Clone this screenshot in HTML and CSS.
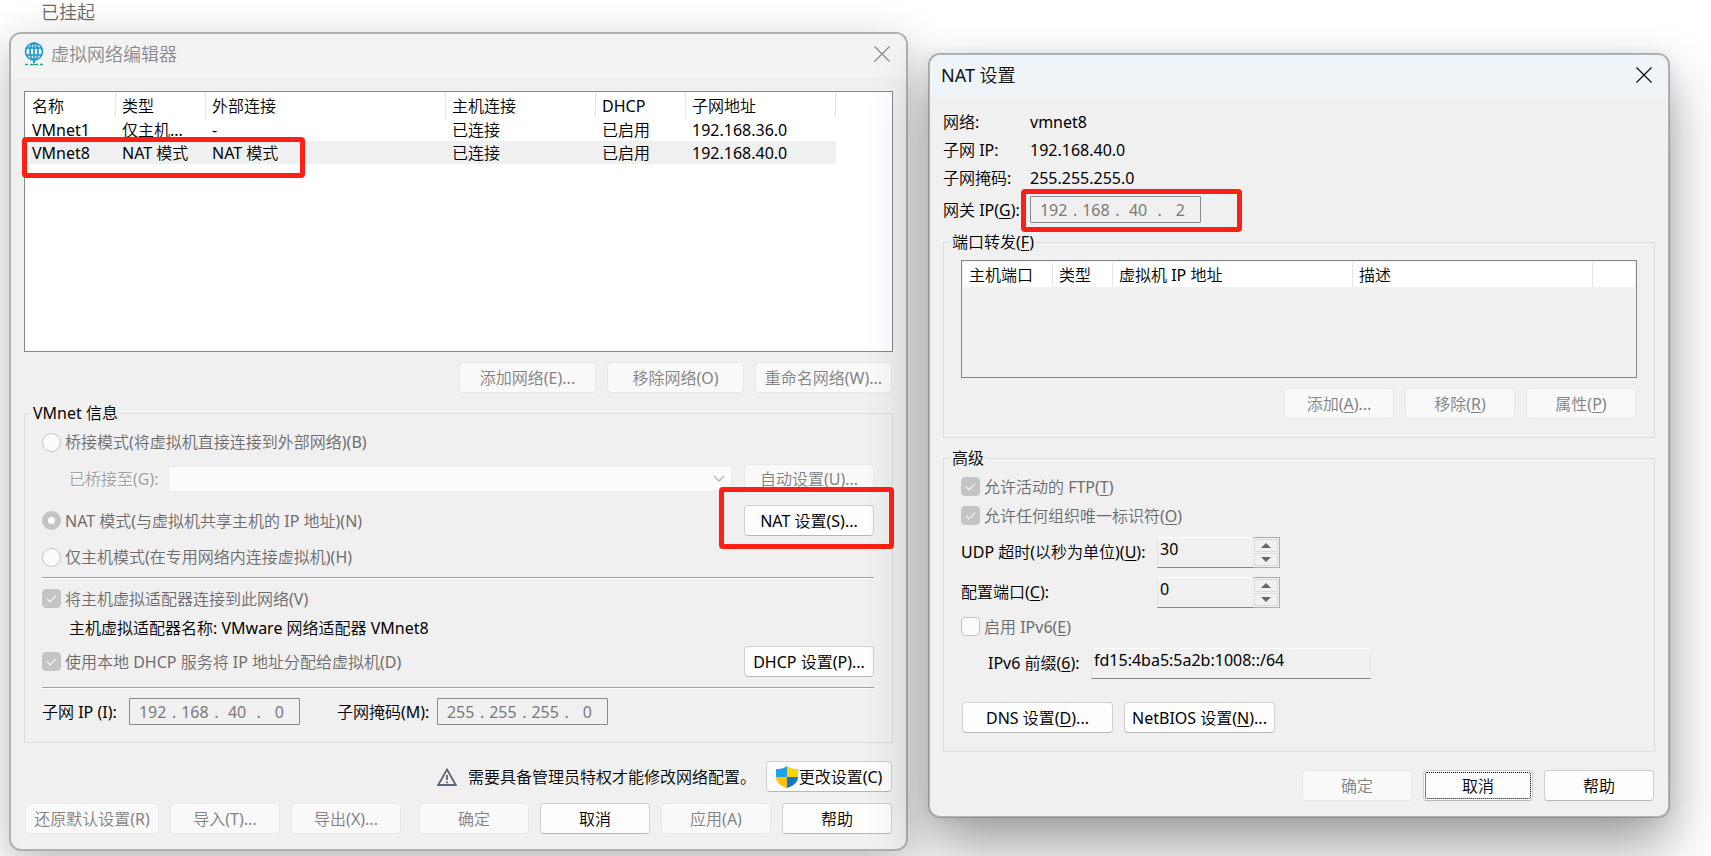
FILE: index.html
```html
<!DOCTYPE html>
<html lang="zh-CN">
<head>
<meta charset="utf-8">
<title>虚拟网络编辑器</title>
<link rel="stylesheet" href="styles.css">
</head>
<body>
<p class="status">已挂起</p>
<main class="desktop">
  <section class="window editor" aria-label="虚拟网络编辑器">
    <header class="titlebar">
      <svg class="globe" viewBox="0 0 20 24" width="20" height="24" fill="none" stroke="#1795d4" stroke-width="1.6" aria-hidden="true">
        <circle cx="10" cy="9.500" r="8.500"/><ellipse cx="10" cy="9.500" rx="4" ry="8.500"/>
        <path d="M10 1v17M2.500 6h15M2.500 13h15"/>
        <path d="M10 18v3" stroke="#17a89a" stroke-width="2"/><path d="M1 22.500h3M6 22.500h8M16 22.500h3" stroke="#17a89a" stroke-width="1.500"/>
      </svg>
      <h1 class="title">虚拟网络编辑器</h1>
      <button class="close" aria-label="关闭"><svg viewBox="0 0 16 16" width="16" height="16"><path d="M.5.5l15 15M15.500.5l-15 15"/></svg></button>
    </header>
    <div class="body">
      <div class="list networks">
        <table class="grid">
          <thead><tr><th class="c-name">名称</th><th class="c-90">类型</th><th class="c-240">外部连接</th><th class="c-150">主机连接</th><th class="c-90">DHCP</th><th class="c-150">子网地址</th></tr></thead>
          <tbody>
            <tr><td>VMnet1</td><td>仅主机...</td><td>-</td><td>已连接</td><td>已启用</td><td>192.168.36.0</td></tr>
            <tr class="selected"><td>VMnet8</td><td>NAT 模式</td><td>NAT 模式</td><td>已连接</td><td>已启用</td><td>192.168.40.0</td></tr>
          </tbody>
        </table>
        <span class="mark mark-row"></span>
      </div>
      <div class="actions">
        <button class="btn w-137" disabled>添加网络(E)...</button>
        <button class="btn w-137" disabled>移除网络(O)</button>
        <button class="btn w-137" disabled>重命名网络(W)...</button>
      </div>
      <fieldset class="group">
        <legend>VMnet 信息</legend>
        <div class="row bridge"><label class="option"><input type="radio" name="mode" disabled>桥接模式(将虚拟机直接连接到外部网络)(B)</label></div>
        <div class="row bridged-to">
          <label class="etched" for="bridge">已桥接至(G):</label>
          <div class="combo">
            <select id="bridge" disabled><option></option></select>
            <svg class="chevron" viewBox="0 0 12 8" width="12" height="8"><path d="M1 1l5 5 5-5"/></svg>
          </div>
          <button class="btn w-130" disabled>自动设置(U)...</button>
        </div>
        <div class="row nat">
          <label class="option"><input type="radio" name="mode" checked disabled>NAT 模式(与虚拟机共享主机的 IP 地址)(N)</label>
          <button class="btn w-130">NAT 设置(S)...</button>
          <span class="mark mark-nat"></span>
        </div>
        <div class="row host"><label class="option"><input type="radio" name="mode" disabled>仅主机模式(在专用网络内连接虚拟机)(H)</label></div>
        <hr class="rule">
        <div class="row connect"><label class="option"><input type="checkbox" checked disabled>将主机虚拟适配器连接到此网络(V)</label></div>
        <div class="row adapter">主机虚拟适配器名称: VMware 网络适配器 VMnet8</div>
        <div class="row dhcp">
          <label class="option"><input type="checkbox" checked disabled>使用本地 DHCP 服务将 IP 地址分配给虚拟机(D)</label>
          <button class="btn w-130">DHCP 设置(P)...</button>
        </div>
        <hr class="rule second">
        <div class="row subnet">
          <label for="ip1">子网 IP (I):</label>
          <div class="ip"><input id="ip1" value="192" disabled><span>.</span><input aria-label="子网 IP 2" value="168" disabled><span>.</span><input aria-label="子网 IP 3" value="40" disabled><span>.</span><input aria-label="子网 IP 4" value="0" disabled></div>
          <label class="mask" for="mask1">子网掩码(M):</label>
          <div class="ip"><input id="mask1" value="255" disabled><span>.</span><input aria-label="子网掩码 2" value="255" disabled><span>.</span><input aria-label="子网掩码 3" value="255" disabled><span>.</span><input aria-label="子网掩码 4" value="0" disabled></div>
        </div>
      </fieldset>
      <div class="notice">
        <svg class="warning" viewBox="0 0 20 18" width="20" height="18" aria-hidden="true"><path d="M10 1.500L18.800 17H1.200z" fill="none" stroke="#5b6871" stroke-width="1.800"/><path d="M10 7v5M10 13.500v1.700" stroke="#5b6871" stroke-width="1.800"/></svg>
        <span class="notice-text">需要具备管理员特权才能修改网络配置。</span>
        <button class="btn change"><svg viewBox="0 0 22 22" width="22" height="22" aria-hidden="true"><path d="M11 0C8 2.500 4 3 0 3v8h11z" fill="#1fa0e8"/><path d="M11 0c3 2.500 7 3 11 3v8H11z" fill="#ffd400"/><path d="M0 11c0 6 6 9.500 11 11V11z" fill="#fdc300"/><path d="M22 11c0 6-6 9.500-11 11V11z" fill="#1274d0"/></svg>更改设置(C)</button>
      </div>
      <div class="actions footer">
        <button class="btn w-134" disabled>还原默认设置(R)</button>
        <button class="btn" disabled>导入(T)...</button>
        <button class="btn" disabled>导出(X)...</button>
        <span class="spacer"></span>
        <button class="btn" disabled>确定</button>
        <button class="btn">取消</button>
        <button class="btn" disabled>应用(A)</button>
        <button class="btn">帮助</button>
      </div>
    </div>
  </section>

  <section class="window settings" aria-label="NAT 设置">
    <header class="titlebar">
      <h2 class="title">NAT 设置</h2>
      <button class="close" aria-label="关闭"><svg viewBox="0 0 16 16" width="16" height="16"><path d="M.5.5l15 15M15.500.5l-15 15"/></svg></button>
    </header>
    <div class="body">
      <dl class="info">
        <div class="pair"><dt>网络:</dt><dd>vmnet8</dd></div>
        <div class="pair"><dt>子网 IP:</dt><dd>192.168.40.0</dd></div>
        <div class="pair"><dt>子网掩码:</dt><dd>255.255.255.0</dd></div>
        <div class="pair gateway"><dt><label for="gw1">网关 IP(<u>G</u>):</label></dt><dd class="gateway-field">
          <div class="ip"><input id="gw1" value="192" disabled><span>.</span><input aria-label="网关 IP 2" value="168" disabled><span>.</span><input aria-label="网关 IP 3" value="40" disabled><span>.</span><input aria-label="网关 IP 4" value="2" disabled></div>
          <span class="mark mark-gateway"></span></dd></div>
      </dl>
      <fieldset class="group forward">
        <legend>端口转发(<u>F</u>)</legend>
        <div class="list ports">
          <table class="grid">
            <thead><tr><th class="c-90">主机端口</th><th class="c-60">类型</th><th class="c-240">虚拟机 IP 地址</th><th class="c-240">描述</th><th class="c-rest"></th></tr></thead>
          </table>
        </div>
        <div class="actions">
          <button class="btn" disabled>添加(<u>A</u>)...</button>
          <button class="btn" disabled>移除(<u>R</u>)</button>
          <button class="btn" disabled>属性(<u>P</u>)</button>
        </div>
      </fieldset>
      <fieldset class="group advanced">
        <legend>高级</legend>
        <div class="row check"><label class="option"><input type="checkbox" checked disabled><span>允许活动的 FTP(<u>T</u>)</span></label></div>
        <div class="row check"><label class="option"><input type="checkbox" checked disabled><span>允许任何组织唯一标识符(<u>O</u>)</span></label></div>
        <div class="row number">
          <label for="udp">UDP 超时(以秒为单位)(<u>U</u>):</label>
          <div class="spin"><input id="udp" class="edit" value="30" readonly><div class="arrows"><button class="arrow up" aria-label="增加"></button><button class="arrow down" aria-label="减少"></button></div></div>
        </div>
        <div class="row number">
          <label for="port">配置端口(<u>C</u>):</label>
          <div class="spin"><input id="port" class="edit" value="0" readonly><div class="arrows"><button class="arrow up" aria-label="增加"></button><button class="arrow down" aria-label="减少"></button></div></div>
        </div>
        <div class="row check"><label class="option"><input type="checkbox" disabled><span>启用 IPv6(<u>E</u>)</span></label></div>
        <div class="row prefix">
          <label for="prefix">IPv6 前缀(<u>6</u>):</label>
          <input id="prefix" class="edit" value="fd15:4ba5:5a2b:1008::/64" readonly>
        </div>
        <div class="services">
          <button class="btn w-151">DNS 设置(<u>D</u>)...</button>
          <button class="btn w-151">NetBIOS 设置(<u>N</u>)...</button>
        </div>
      </fieldset>
      <div class="actions closing">
        <button class="btn" disabled>确定</button>
        <button class="btn focused">取消</button>
        <button class="btn">帮助</button>
      </div>
    </div>
  </section>
</main>
</body>
</html>
```
FILE: styles.css
```css
* { box-sizing: border-box; }

body {
  margin: 0;
  min-height: 100vh;
  overflow: hidden;
  background: #fff;
  color: #000;
  font: 16px/20px "Noto Sans", "Noto Sans CJK SC DemiLight", "Noto Sans CJK SC Light", "Noto Sans CJK SC", sans-serif;
}

button, input, select { font: inherit; color: inherit; }
u { text-underline-offset: 2px; text-decoration-thickness: 1px; }

.status {
  margin: 0;
  padding: 0 0 8px 41px;
  color: #6a6a6a;
  font-size: 18px;
  line-height: 24px;
}

.desktop {
  display: grid;
  grid-template-columns: 899fr 742fr;
  gap: 20px;
  align-items: start;
  padding: 0 41px 0 9px;
}

/* Windows */
.window {
  min-width: 0;
  border: 2px solid #b0b0b0;
  border-radius: 12px;
  background: #f0f0f0;
  background-clip: padding-box;
}
.editor { box-shadow: 0 16px 48px rgba(0, 0, 0, .28); }
.settings {
  position: relative;
  margin-top: 21px;
  border-color: rgba(130, 130, 130, .6);
  box-shadow: 0 28px 56px rgba(0, 0, 0, .38), 0 0 16px rgba(0, 0, 0, .08);
}

.titlebar {
  display: flex;
  align-items: center;
  height: 43px;
  padding: 0 16px 3px 13px;
  border-radius: 10px 10px 0 0;
  background: #f3f3f3;
  color: #8c8c8c;
}
.settings .titlebar { background: #eff4f8; color: #111; padding-left: 11px; }
.globe { margin-right: 7px; }
.title { margin: 0; flex: 1; font-size: 18px; line-height: 24px; font-weight: 400; }
.close { display: flex; padding: 0; border: 0; background: none; }
.close svg { fill: none; stroke: currentColor; stroke-width: 1.3; }

.body { padding: 14px 13px 15px; }
.settings .body { padding-top: 10px; }

/* Lists */
.list { position: relative; border: 1px solid #828790; background: #fff; }
.networks { min-height: 261px; padding-left: 5px; }
.ports { min-height: 118px; padding: 1px; background: #f0f0f0; }
.grid { border-collapse: collapse; table-layout: fixed; }
.networks .grid { width: 806px; }
.ports .grid { width: 100%; }
.grid th {
  height: 26px;
  padding: 2px 6px 0;
  background: linear-gradient(#e5e5e5, #e5e5e5) right 1px / 1px 25px no-repeat #fff;
  font-weight: 400;
  text-align: left;
}
.grid td { height: 23px; padding: 0 6px; white-space: nowrap; }
.networks th:first-child, .networks td:first-child { padding-left: 2px; }
.selected td { background: #f0f0f0; }
.ports th { height: 25px; padding-top: 0; background-position: right 0; }
.c-name { width: 86px; }
.c-60 { width: 60px; }
.c-90 { width: 90px; }
.c-150 { width: 150px; }
.c-240 { width: 240px; }
.grid .c-rest { background: #fff; }

/* Buttons */
.btn {
  display: flex;
  align-items: center;
  justify-content: center;
  width: 110px;
  height: 31px;
  padding: 0;
  border: 1px solid #d0d0d0;
  border-bottom-color: #b8b8b8;
  border-radius: 4px;
  background: #fdfdfd;
  white-space: nowrap;
}
.btn:disabled { border-color: #e8e8e8; background: #f9f9f9; color: #838383; }
.w-130 { width: 130px; }
.w-134 { width: 134px; }
.w-137 { width: 137px; }
.w-151 { width: 151px; }
.focused { outline: 1px dotted #000; outline-offset: -3px; }
.actions {
  display: flex;
  justify-content: flex-end;
  gap: 11px;
  margin-top: 10px;
  padding-right: 1px;
}
.footer { justify-content: flex-start; margin-top: 11px; padding-left: 1px; }
.spacer { flex: 1; margin-right: -11px; }
.closing { margin-top: 18px; }

/* Groups */
.group { min-width: 0; margin: 10px 0 0; padding: 0 18px 8px 17px; border: 1px solid #dcdcdc; }
.group legend { height: 20px; margin-left: -11px; padding: 0 2px; }
.row { display: flex; align-items: center; }
.option { display: flex; align-items: center; gap: 4px; flex: 1; color: #6d6d6d; }
.option input {
  appearance: none;
  width: 19px;
  height: 19px;
  margin: 0;
  border: 1px solid #c4c4c4;
  background: #fbfbfb;
}
.option input[type="radio"] { border-radius: 50%; }
.option input[type="radio"]:checked { border-width: 6px; background: #fff; }
.option input[type="checkbox"] { display: grid; place-items: center; border-radius: 4px; }
.option input[type="checkbox"]:checked { background: #c4c4c4; }
.option input[type="checkbox"]:checked::before {
  content: "";
  width: 8px;
  height: 4px;
  margin-bottom: 2px;
  border: solid #fff;
  border-width: 0 0 1px 1px;
  transform: rotate(-45deg);
}
.rule { height: 2px; margin: 7px 0 0; border: 0; border-top: 1px solid #a0a0a0; border-bottom: 1px solid #fff; }
.rule.second { margin-top: 1px; }

.bridge { height: 38px; }
.bridged-to { height: 36px; padding-left: 27px; }
.nat { position: relative; height: 47px; }
.host { height: 26px; }
.connect { height: 39px; }
.adapter { height: 19px; padding-left: 27px; }
.dhcp { height: 49px; }
.subnet { height: 45px; }

.etched { width: 99px; color: #a0a0a0; text-shadow: 1px 1px 0 #fff; }
.combo { position: relative; flex: 1; margin-right: 12px; }
.combo select {
  appearance: none;
  display: block;
  width: 100%;
  height: 26px;
  border: 1px solid #ebebeb;
  border-radius: 0;
  background: #fbfbfb;
  opacity: 1;
}
.chevron { position: absolute; top: 9px; right: 7px; fill: none; stroke: #b4b4b4; stroke-width: 1.3; }

.ip {
  display: flex;
  align-items: center;
  width: 171px;
  height: 27px;
  padding: 0 1px 0 4px;
  border: 1px solid #8a8a8a;
  border-radius: 1px;
  color: #7a7a7a;
}
.ip input {
  flex: 1;
  min-width: 0;
  height: 20px;
  padding: 0;
  border: 0;
  background: none;
  text-align: center;
}
.ip span { width: 5px; text-align: right; }
.subnet label { width: 87px; }
.subnet .mask { width: 100px; margin-left: 37px; }

.notice { display: flex; align-items: center; justify-content: flex-end; margin-top: 18px; padding-right: 1px; }
.warning { margin-right: 11px; }
.notice-text { margin-right: 10px; }
.change { width: 126px; gap: 1px; }

/* NAT settings */
.info { margin: 0; }
.pair { display: flex; align-items: center; height: 28px; }
.pair dt { width: 87px; white-space: nowrap; }
.pair dd { margin: 0; }
.gateway { height: 35px; }
.gateway-field { position: relative; }
.forward { margin-top: 5px; padding: 8px 17px 18px; }
.advanced { padding: 4px 17px 18px; }
.check { height: 29px; }
.check + .number { margin-top: 2px; }
.number { height: 40px; }
.number label { width: 196px; }
.edit {
  width: 280px;
  height: 31px;
  padding: 0 2px 7px;
  border: 1px solid #e6e6e6;
  border-top-color: #fff;
  border-bottom-color: #868686;
  border-radius: 0;
  background: #f0f0f0;
}
.spin { display: flex; width: 123px; }
.spin .edit { flex: 1; min-width: 0; border-right: 0; }
.arrows {
  display: flex;
  flex-direction: column;
  gap: 1px;
  width: 27px;
  height: 31px;
  padding: 1px;
  border: 1px solid #ababb3;
  border-left: 0;
}
.arrow { display: grid; place-items: center; flex: 1; padding: 0; border: 1px solid #dcdcdc; background: #f0f0f0; }
.arrow::before { content: ""; border: 5px solid transparent; }
.up::before { border-top: 0; border-bottom-color: #666; }
.down::before { border-bottom: 0; border-top-color: #666; }
.prefix { height: 44px; padding-left: 27px; }
.prefix label { width: 103px; }
.services { display: flex; gap: 11px; margin-top: 17px; padding-left: 1px; }

/* Highlight frames drawn over the windows */
.mark {
  position: absolute;
  border: 5px solid #ff2015;
  border-radius: 4px;
  pointer-events: none;
}
.mark-row { top: 45px; left: -3px; width: 283px; height: 41px; }
.mark-nat { top: -10px; right: -20px; width: 175px; height: 62px; }
.mark-gateway { top: -7px; left: -9px; width: 221px; height: 43px; }
```
